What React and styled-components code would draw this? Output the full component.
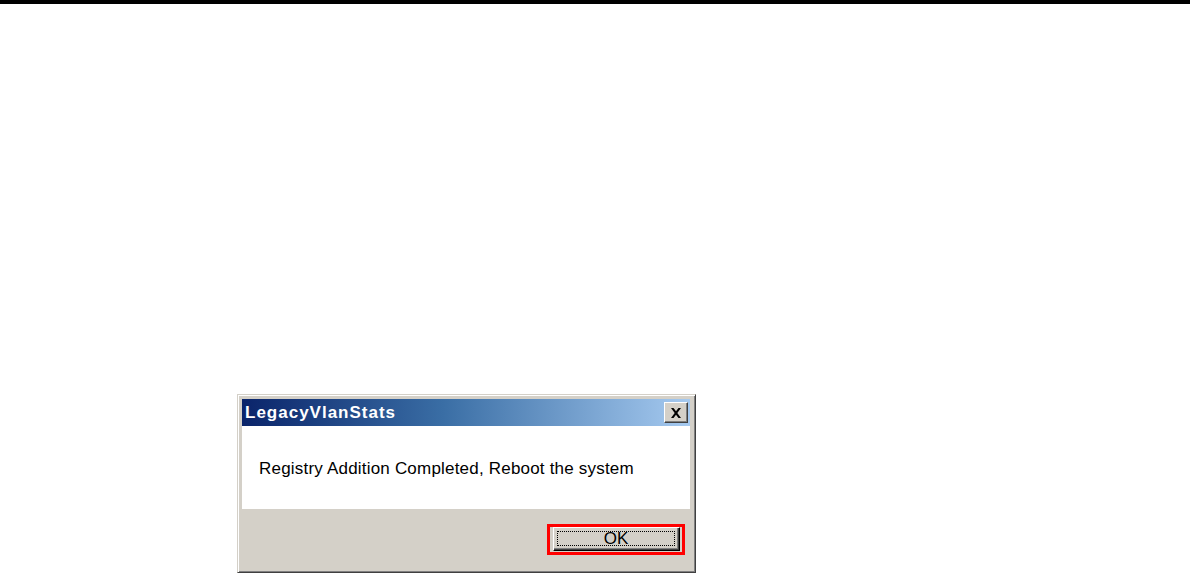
import styled, { createGlobalStyle } from "styled-components";

const GlobalStyle = createGlobalStyle`
  html, body {
    margin: 0;
    padding: 0;
    background: #ffffff;
    overflow: hidden;
  }
  body {
    font-family: "Liberation Sans", Arial, sans-serif;
  }
`;

const Page = styled.div`
  width: 1190px;
  height: 573px;
  background: #ffffff;
  display: flex;
  flex-direction: column;
`;

const TopRule = styled.div`
  height: 4px;
  background: #000000;
`;

const Figure = styled.div`
  padding: 390px 0 0 237px;
`;

const Window = styled.div`
  width: 459px;
  height: 179px;
  box-sizing: border-box;
  background: #d4d0c8;
  border-top: 1px solid #d4d0c8;
  border-left: 1px solid #d4d0c8;
  border-right: 1px solid #404040;
  border-bottom: 1px solid #404040;
  box-shadow: inset 1px 1px 0 #ffffff, inset -1px -1px 0 #808080;
  padding: 4px 5px 3px 4px;
  display: flex;
  flex-direction: column;
`;

const TitleBar = styled.div`
  height: 27px;
  flex: none;
  background: linear-gradient(to right, #0a246a 0%, #3a6ea5 45%, #a6caf0 100%);
  display: flex;
  align-items: center;
  justify-content: space-between;
  padding: 0 2px 0 3px;
`;

const Title = styled.span`
  color: #ffffff;
  font-family: "Liberation Sans", Arial, sans-serif;
  font-weight: bold;
  font-size: 17px;
  letter-spacing: 1px;
`;

const CloseButton = styled.div`
  width: 24px;
  height: 21px;
  box-sizing: border-box;
  background: #d4d0c8;
  border-top: 1px solid #ffffff;
  border-left: 1px solid #ffffff;
  border-right: 1px solid #404040;
  border-bottom: 1px solid #404040;
  box-shadow: inset -1px -1px 0 #808080;
  display: flex;
  align-items: center;
  justify-content: center;
`;

const Message = styled.div`
  height: 83px;
  flex: none;
  background: #ffffff;
  display: flex;
  align-items: center;
  padding-left: 17px;
  padding-top: 2px;
  box-sizing: border-box;
  font-family: "Liberation Sans", Arial, sans-serif;
  font-size: 17px;
  letter-spacing: 0.2px;
  color: #000000;
`;

const Footer = styled.div`
  flex: 1;
  display: flex;
  justify-content: flex-end;
  align-items: flex-start;
  padding: 18px 10px 0 0;
`;

const Marked = styled.div`
  position: relative;
  &::after {
    content: "";
    position: absolute;
    top: -3px;
    left: -6px;
    right: -5px;
    bottom: -4px;
    border: 3px solid #ff0000;
  }
`;

const Button = styled.div`
  width: 127px;
  height: 24px;
  box-sizing: border-box;
  background: #d4d0c8;
  border: 1px solid #000000;
  border-top-color: #ffffff;
  border-left-color: #ffffff;
  box-shadow: inset -1px -1px 0 #404040, inset -2px -2px 0 #808080;
  padding: 3px 4px 4px 3px;
  display: flex;
`;

const Focus = styled.div`
  flex: 1;
  border: 1px dotted #000000;
  display: flex;
  align-items: center;
  justify-content: center;
  font-family: "Liberation Sans", Arial, sans-serif;
  font-size: 17px;
  color: #000000;
`;

const CloseGlyph = () => (
  <svg width="12" height="10" viewBox="0 0 12 10">
    <path d="M1 0 L3.5 0 L6 3.3 L8.5 0 L11 0 L7.3 5 L11 10 L8.5 10 L6 6.7 L3.5 10 L1 10 L4.7 5 Z" fill="#000" />
  </svg>
);

export default function App() {
  return (
    <Page>
      <GlobalStyle />
      <TopRule />
      <Figure>
        <Window>
          <TitleBar>
            <Title>LegacyVlanStats</Title>
            <CloseButton>
              <CloseGlyph />
            </CloseButton>
          </TitleBar>
          <Message>Registry Addition Completed, Reboot the system</Message>
          <Footer>
            <Marked>
              <Button>
                <Focus>OK</Focus>
              </Button>
            </Marked>
          </Footer>
        </Window>
      </Figure>
    </Page>
  );
}
